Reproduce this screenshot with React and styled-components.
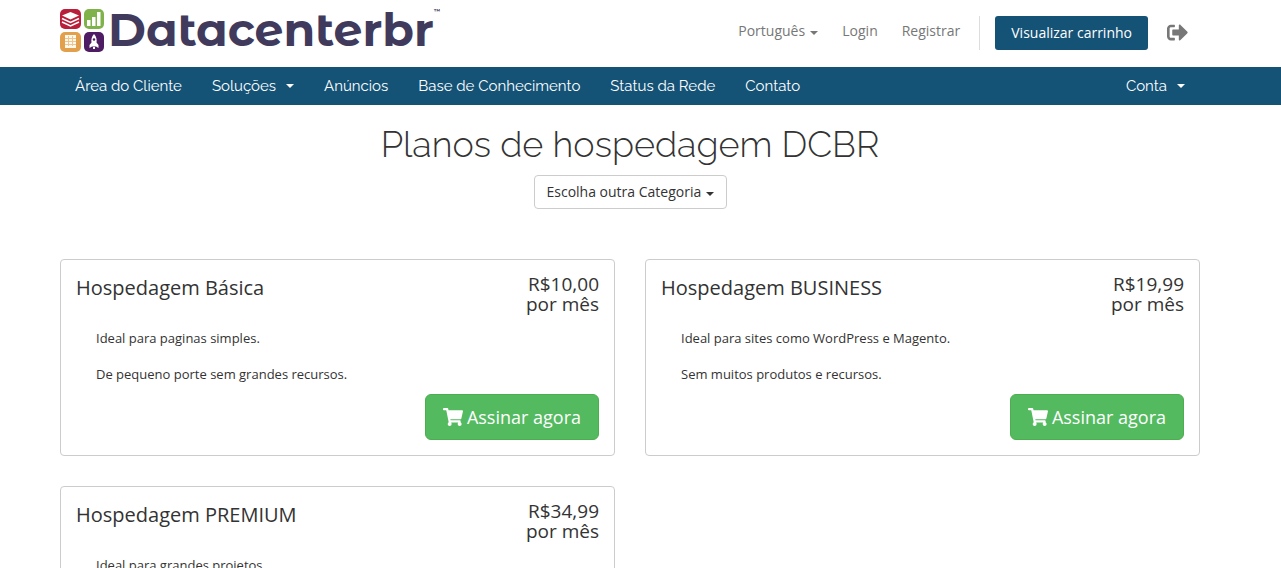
import React from 'react'
import styled, { createGlobalStyle } from 'styled-components'
import { FaShoppingCart, FaSignOutAlt } from 'react-icons/fa'

const GlobalStyle = createGlobalStyle`
	* {
		box-sizing: border-box;
	}
	body {
		margin: 0;
		background: #fff;
		color: #333;
		font-family: "Open Sans", Verdana, Tahoma, sans-serif;
		font-size: 14px;
		line-height: 20px;
	}
	a {
		color: inherit;
		text-decoration: none;
	}
	button, select {
		font: inherit;
		cursor: pointer;
	}
`

const Section = styled.div`
	padding: 0 66px 0 45px;
	background: ${(props) => props.$bg || 'transparent'};
`

const Container = styled.div`
	max-width: 1170px;
	margin: 0 auto;
	padding: 0 15px;
`

const HeaderRow = styled.header`
	display: flex;
	align-items: flex-start;
	justify-content: space-between;
	height: 67px;
`

const Logo = styled.a`
	display: flex;
	align-items: center;
	gap: 3px;
	padding-top: 8px;
	color: #403a5c;
`

const Wordmark = styled.span`
	font-family: "Montserrat Alternates", Montserrat, "DejaVu Sans", sans-serif;
	font-size: 46px;
	font-weight: 700;
	line-height: 44px;
`

const TradeMark = styled.sup`
	font-size: 6px;
	line-height: 6px;
	vertical-align: top;
`

const TopNav = styled.nav`
	display: flex;
	align-items: center;
	padding: 16px 12px 0 0;
	color: #777;
`

const TopLinks = styled.div`
	display: flex;
	align-items: center;
	gap: 24px;
	height: 34px;
	padding: 0 19px 4px 0;
	margin-right: 15px;
	border-right: 1px solid #ddd;
`

const CartButton = styled.a`
	padding: 7px 16px;
	border-radius: 3px;
	background: #145276;
	color: #fff;
	line-height: 20px;
`

const ExitLink = styled.a`
	display: flex;
	margin-left: 19px;
	padding-bottom: 2px;
	font-size: 21px;
`

const Caret = styled.span`
	display: inline-block;
	border-top: 4px solid;
	border-left: 4px solid transparent;
	border-right: 4px solid transparent;
`

const SelectWrap = styled.label`
	position: relative;
	display: inline-block;

	${Caret} {
		position: absolute;
		right: ${(props) => (props.$boxed ? '13px' : '0')};
		top: 50%;
		pointer-events: none;
	}
`

const Select = styled.select`
	display: block;
	appearance: none;
	margin: 0;
	padding: ${(props) => (props.$boxed ? '6px 24px 6px 12px' : '0 13px 0 0')};
	border: ${(props) => (props.$boxed ? '1px solid #ccc' : '0')};
	border-radius: 4px;
	background: transparent;
	color: inherit;
	line-height: 20px;
`

const MainNav = styled.nav`
	display: flex;
	height: 38px;
	color: #fff;
	font-family: Raleway, Lato, sans-serif;
	font-size: 15px;
`

const navItem = `
	display: flex;
	align-items: center;
	gap: 10px;
	padding: 0 15px;
	border: 0;
	background: none;
	color: inherit;
`

const NavLink = styled.a`
	${navItem}
`

const NavButton = styled.button`
	${navItem}
	margin-left: ${(props) => (props.$end ? 'auto' : '0')};
`

const Title = styled.h1`
	margin: 0;
	padding: 19px 0 11px;
	font-family: Raleway, Lato, sans-serif;
	font-size: 36px;
	font-weight: 300;
	line-height: 40px;
`

const PageHead = styled.div`
	text-align: center;
	padding-bottom: 50px;
`

const Plans = styled.div`
	display: grid;
	grid-template-columns: 1fr 1fr;
	gap: 30px;
`

const PlanCard = styled.article`
	padding: 15px;
	border: 1px solid #ccc;
	border-radius: 4px;
`

const PlanHead = styled.div`
	display: flex;
	justify-content: space-between;
	font-size: 20px;
	line-height: 20px;
`

const PlanName = styled.h2`
	margin: 3px 0 0;
	font-size: 20px;
	font-weight: 400;
`

const Price = styled.div`
	margin-top: -1px;
	font-size: 19px;
	text-align: right;
`

const Description = styled.div`
	padding: 15px 20px 0;
	font-size: 13px;
	line-height: 18px;

	p {
		margin: 0 0 18px;
	}
`

const PlanFoot = styled.div`
	display: flex;
	justify-content: flex-end;
	margin-top: -7px;
`

const OrderButton = styled.button`
	display: flex;
	align-items: center;
	gap: 4px;
	padding: 10px 17px;
	border: 1px solid #4cae4c;
	border-radius: 6px;
	background: #53ba60;
	color: #fff;
	font-size: 18px;
	line-height: 24px;
`

const plans = [
	{ name: 'Hospedagem Básica', price: 'R$10,00', lines: ['Ideal para paginas simples.', 'De pequeno porte sem grandes recursos.'] },
	{ name: 'Hospedagem BUSINESS', price: 'R$19,99', lines: ['Ideal para sites como WordPress e Magento.', 'Sem muitos produtos e recursos.'] },
	{ name: 'Hospedagem PREMIUM', price: 'R$34,99', lines: ['Ideal para grandes projetos.'] },
]

function LogoMark() {
	return (
		<svg width="45" height="44" viewBox="0 0 45 44" aria-hidden="true">
			<rect x="0" y="1" width="21" height="20" rx="5" fill="#b91f3a" />
			<rect x="24" y="1" width="20" height="20" rx="5" fill="#7fb24a" />
			<rect x="0" y="24" width="21" height="20" rx="5" fill="#e2a04d" />
			<rect x="24" y="24" width="20" height="20" rx="5" fill="#4d1c63" />
			<path d="M2 7.500L10.500 4 19 7.500 10.500 11.500z" fill="#fff" />
			<path d="M2 10.500l8.500 4 8.500-4M2 14l8.500 4 8.500-4" fill="none" stroke="#fff" strokeWidth="1.500" />
			<path d="M27 12h3.500v6H27zM32 9h3.500v9H32zM37 4h3.500v14H37z" fill="#fff" />
			<path d="M5 27h11v13H5z" fill="#fff8ec" />
			<path d="M5 30.500h11M5 33.500h11M5 36.500h11M8.500 28v10M12.500 28v10" stroke="#edc58f" strokeWidth="1" />
			<path d="M34 26c2.500 2.500 3 6 2.500 8.500l2 2.500v3l-2.500-1.500h-4L29.500 40v-3l2-2.500c-.5-2.500 0-6 2.500-8.500zM33 39h2v2h-2z" fill="#fff" />
			<circle cx="34" cy="31.500" r="1.200" fill="#4d1c63" />
		</svg>
	)
}

function Plan({ name, price, lines }) {
	return (
		<PlanCard>
			<PlanHead>
				<PlanName>{name}</PlanName>
				<Price>{price}<br />por mês</Price>
			</PlanHead>
			<Description>
				{lines.map((line) => <p key={line}>{line}</p>)}
			</Description>
			<PlanFoot>
				<OrderButton type="button"><FaShoppingCart size={20} /> Assinar agora</OrderButton>
			</PlanFoot>
		</PlanCard>
	)
}

export default function App() {
	return (
		<>
			<GlobalStyle />
			<Section>
				<Container>
					<HeaderRow>
						<Logo href="#">
							<LogoMark />
							<Wordmark>Datacenterbr<TradeMark>™</TradeMark></Wordmark>
						</Logo>
						<TopNav>
							<TopLinks>
								<SelectWrap>
									<Select aria-label="Português"><option>Português</option></Select>
									<Caret />
								</SelectWrap>
								<a href="#">Login</a>
								<a href="#">Registrar</a>
							</TopLinks>
							<CartButton href="#">Visualizar carrinho</CartButton>
							<ExitLink href="#" aria-label="Login"><FaSignOutAlt /></ExitLink>
						</TopNav>
					</HeaderRow>
				</Container>
			</Section>
			<Section $bg="#145276">
				<Container>
					<MainNav>
						<NavLink href="#">Área do Cliente</NavLink>
						<NavButton type="button" aria-haspopup="menu">Soluções <Caret /></NavButton>
						<NavLink href="#">Anúncios</NavLink>
						<NavLink href="#">Base de Conhecimento</NavLink>
						<NavLink href="#">Status da Rede</NavLink>
						<NavLink href="#">Contato</NavLink>
						<NavButton type="button" aria-haspopup="menu" $end>Conta <Caret /></NavButton>
					</MainNav>
				</Container>
			</Section>
			<Section as="main">
				<Container>
					<PageHead>
						<Title>Planos de hospedagem DCBR</Title>
						<SelectWrap $boxed>
							<Select $boxed aria-label="Escolha outra Categoria"><option>Escolha outra Categoria</option></Select>
							<Caret />
						</SelectWrap>
					</PageHead>
					<Plans>
						{plans.map((plan) => <Plan key={plan.name} {...plan} />)}
					</Plans>
				</Container>
			</Section>
		</>
	)
}
